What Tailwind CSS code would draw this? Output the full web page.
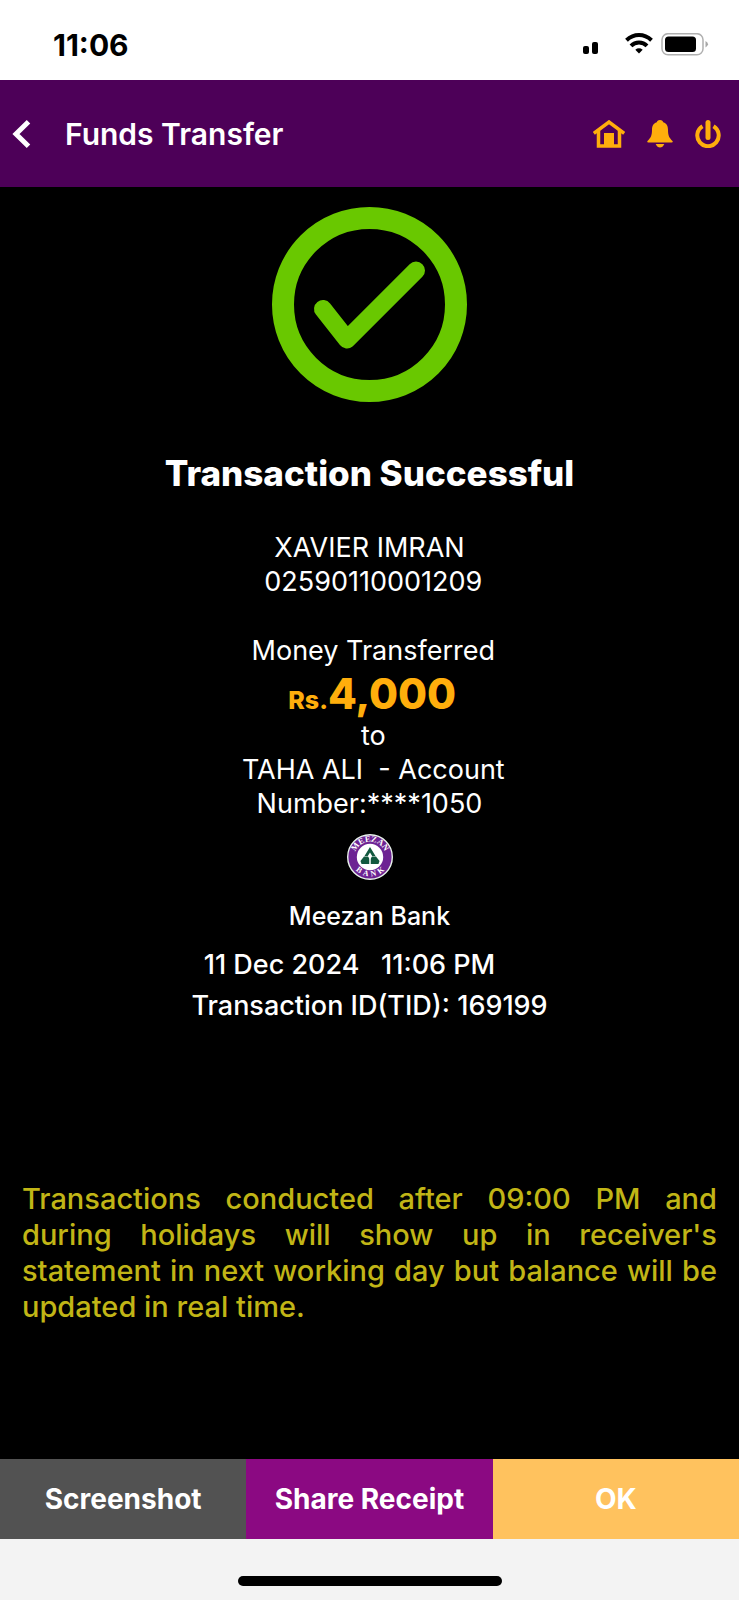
<!DOCTYPE html>
<html lang="en">
<head>
<meta charset="utf-8">
<meta name="viewport" content="width=device-width, initial-scale=1">
<title>Funds Transfer</title>
<script src="https://cdn.jsdelivr.net/npm/@tailwindcss/browser@4"></script>
</head>
<body class="flex min-h-screen flex-col bg-black font-['Inter',sans-serif] text-white">
  <div class="flex h-20 items-center justify-between bg-white pt-[10px] pr-[30px] pl-[53px] text-black">
    <time class="text-[30px] leading-8 font-bold">11:06</time>
    <div class="flex items-center">
      <svg class="h-6 w-4" viewBox="0 0 16 24" role="img" aria-label="Signal">
        <rect x="0" y="13" width="6" height="8" rx="2"/>
        <rect x="9" y="9" width="6" height="12" rx="2"/>
      </svg>
      <svg class="ml-[26px] h-6 w-7" viewBox="0 0 28 24" role="img" aria-label="Wi-Fi" fill="none" stroke="#000">
        <path d="M1.500 7.200Q7 2 14 2t12.500 5.200" stroke-width="4"/>
        <path d="M6 12.800Q9.300 9.500 14 9.500t8 3.300" stroke-width="4"/>
        <path d="M14 20.500l-3.700-3.800Q14 14 17.700 16.700z" fill="#000" stroke="none"/>
      </svg>
      <svg class="ml-2 h-6 w-12" viewBox="0 0 48 24" role="img" aria-label="Battery">
        <rect x="1" y="0.700" width="41" height="21" rx="6" fill="none" stroke="#b0b0b0" stroke-width="1.500"/>
        <rect x="4" y="3.500" width="31" height="15.500" rx="3.500"/>
        <path d="M44.500 8q5 3.200 0 6.400z" fill="#a8a8a8"/>
      </svg>
    </div>
  </div>

  <header class="flex h-[107px] items-center bg-[#4d0058] pr-[18px] pl-3">
    <button type="button" aria-label="Back" class="flex h-8 w-[53px] items-center">
      <svg class="h-7 w-5" viewBox="0 0 20 28" fill="none" stroke="#fff" stroke-width="5"><path d="M16.500 1.800L4 14l12.500 12.200"/></svg>
    </button>
    <h1 class="flex-1 text-[30px] leading-9 font-semibold">Funds Transfer</h1>
    <nav class="flex items-center gap-[22px] text-[#ffae0c]">
      <button type="button" aria-label="Home">
        <svg class="h-7 w-8" viewBox="0 0 32 28" fill="none" stroke="currentColor">
          <path d="M0.800 13.300L16 2l15.200 11.300" stroke-width="3.500"/>
          <path d="M5.500 10v16h21V10" stroke-width="3.500"/>
          <path d="M11 13h10v13H11z" fill="currentColor" stroke="none"/>
        </svg>
      </button>
      <button type="button" aria-label="Notifications">
        <svg class="h-7 w-[26px]" viewBox="0 0 26 28" fill="currentColor">
          <path d="M13 0c2 0 3 1 3.200 2.300C20 3.500 21 6.500 21 10c0 6 1.500 8 4.500 11 .6.900.2 1.600-.8 1.600H1.300c-1 0-1.400-.7-.8-1.600C3.500 18 5 16 5 10c0-3.500 1-6.500 4.800-7.700C10 1 11 0 13 0z"/>
          <path d="M8.700 24h8.600c-1 2.500-2.500 3.500-4.300 3.500S9.700 26.500 8.700 24z"/>
        </svg>
      </button>
      <button type="button" aria-label="Log out">
        <svg class="h-7 w-[26px]" viewBox="0 0 26 28" fill="none" stroke="currentColor">
          <path d="M7.500 6.300a10.700 10.700 0 1 0 11 0" stroke-width="4"/>
          <path d="M13 2.500v15" stroke-width="5" stroke-linecap="round"/>
        </svg>
      </button>
    </nav>
  </header>

  <main class="flex flex-1 flex-col items-center px-[22px] pt-5">
    <svg class="size-[195px]" viewBox="0 0 195 195" fill="none" stroke="#69c800" role="img" aria-label="Success">
      <circle cx="97.500" cy="97.500" r="86.500" stroke-width="22"/>
      <path d="M51 102l24 30.500L144 63.500" stroke-width="18" stroke-linecap="round" stroke-linejoin="round"/>
    </svg>
    <h2 class="mt-[49px] text-[35px] leading-11 font-extrabold">Transaction Successful</h2>
    <div class="mt-9 text-center text-[27px] leading-[34px] font-normal">
      <p>XAVIER IMRAN</p>
      <p>&nbsp;02590110001209</p>
      <p class="mt-[35px]">&nbsp;Money Transferred</p>
      <p class="text-[42px] leading-[51px] font-extrabold text-[#ffae0c]"><span class="text-[25px] leading-none">&nbsp;Rs.</span>4,000</p>
      <p>&nbsp;to</p>
      <p>&nbsp;TAHA ALI&nbsp; - Account</p>
      <p>Number:****1050</p>
    </div>
    <svg class="mt-3 size-12" viewBox="0 0 48 48" role="img" aria-label="Meezan Bank logo">
      <defs>
        <path id="ring-top" d="M9.500 30A15.600 15.600 0 1 1 38.500 30"/>
        <path id="ring-bottom" d="M4 26A20.200 20.200 0 0 0 44 26"/>
      </defs>
      <circle cx="24" cy="24" r="22.300" fill="#6d2393" stroke="#e9f3ec" stroke-width="1.400"/>
      <circle cx="24" cy="24" r="13.200" fill="#fff"/>
      <g fill="#12583f">
        <path d="M24 14l5.500 9h-3.300L24 19.500 21.800 23h-3.300z"/>
        <path d="M18 23.500h4l2 3v4.500h-8.500l-1-3z"/>
        <path d="M30 23.500h-4l-2 3v4.500h8.500l1-3z"/>
      </g>
      <path d="M24 24v7" stroke="#fff" stroke-width="1.500"/>
      <g fill="#fff" font-family="Liberation Serif, serif" font-weight="700" text-anchor="middle">
        <text font-size="8.500"><textPath href="#ring-top" startOffset="50%">MEEZAN</textPath></text>
        <text font-size="8" dx="0 3 3 3"><textPath href="#ring-bottom" startOffset="50%">BANK</textPath></text>
      </g>
    </svg>
    <div class="text-center font-medium">
      <p class="mt-[19px] text-[25px] leading-8">Meezan Bank</p>
      <p class="mt-[17px] pr-10 text-[27px] leading-8">11 Dec 2024 &nbsp; 11:06 PM</p>
      <p class="mt-[9px] text-[27px] leading-8">Transaction ID(TID): 169199</p>
    </div>
    <p class="mt-[159px] w-full text-justify text-[29px] leading-9 font-medium text-[#c1b516]">Transactions conducted after 09:00 PM and during holidays will show up in receiver's statement in next working day but balance will be updated in real time.</p>
  </main>

  <div class="grid h-20 grid-cols-3 text-[28px] font-bold">
    <button type="button" class="bg-[#525252]">Screenshot</button>
    <button type="button" class="bg-[#8b0982]">Share Receipt</button>
    <button type="button" class="bg-[#ffc25e]">OK</button>
  </div>
  <footer class="flex h-[61px] items-end justify-center bg-[#f3f3f3] pb-[14px]">
    <div class="h-[10px] w-[264px] rounded-full bg-black"></div>
  </footer>
</body>
</html>
